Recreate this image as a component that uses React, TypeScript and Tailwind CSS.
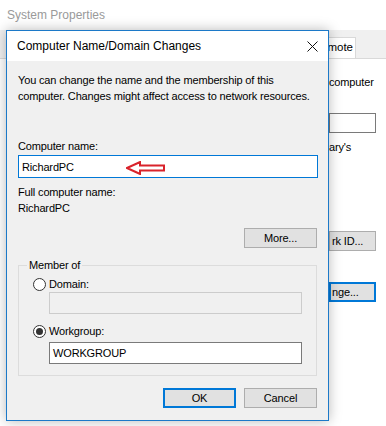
import React from 'react';

function Radio({ checked }: { checked?: boolean }) {
  return (
    <span className="w-[13px] h-[13px] rounded-full border border-[#333] bg-white flex items-center justify-center shrink-0">
      {checked && <span className="w-[7px] h-[7px] rounded-full bg-[#333]" />}
    </span>
  );
}

function RedArrow() {
  return (
    <svg width="40" height="14" viewBox="0 0 40 14" className="ml-[52px] mt-[3px]">
      <path
        d="M1 7 L14 1 L14 4.5 L38 4.5 L38 9.5 L14 9.5 L14 13 Z"
        fill="#fff"
        stroke="#d9232b"
        strokeWidth="2"
        strokeLinejoin="miter"
      />
    </svg>
  );
}

export default function App() {
  return (
    <div
      className="relative w-[386px] h-[426px] overflow-hidden bg-white text-black"
      style={{ fontFamily: '"Liberation Sans", Arial, sans-serif' }}
    >
      {/* background window */}
      <div className="h-[30px] pl-[7px] flex items-center text-[12px] text-[#9a9a9a]">System Properties</div>
      <div className="h-[28px] bg-[#f0f0f0] flex items-end pl-[300px]">
        <div className="h-[21px] w-[56px] border border-b-0 border-[#d9d9d9] bg-white text-[11.5px] flex items-center justify-end pr-[2px]">
          Remote
        </div>
      </div>
      <div className="flex flex-col pl-[329px] text-[11px] tracking-[-0.15px] border-t border-[#d9d9d9]">
        <div className="mt-[15px] h-[16px] flex items-center">computer</div>
        <div className="mt-[23px] w-[47px] h-[20px] border border-[#7a7a7a] bg-white" />
        <div className="mt-[6px] h-[16px] flex items-center">ary's</div>
        <div className="mt-[76px] w-[47px] h-[20px] border border-[#adadad] bg-[#e1e1e1] flex items-center pl-[2px]">rk ID...</div>
        <div className="mt-[31px] w-[47px] h-[20px] border-2 border-[#0078d7] bg-[#e1e1e1] flex items-center pl-[1px]">nge...</div>
      </div>

      {/* dialog */}
      <div className="absolute left-[6px] top-[30px] w-[323px] h-[391px] border border-[#1c79c8] bg-[#f0f0f0] flex flex-col shadow-[0_0_12px_rgba(0,0,0,0.28)]">
        <div className="h-[30px] bg-white flex items-center justify-between pl-[10px] pr-[10px] text-[12px]">
          <span>Computer Name/Domain Changes</span>
          <svg width="11" height="11" viewBox="0 0 11 11">
            <path d="M0.5 0.5 L10.5 10.5 M10.5 0.5 L0.5 10.5" stroke="#111" strokeWidth="1" />
          </svg>
        </div>
        <div className="flex flex-col pl-[11px] pr-[10px] pt-[11px] text-[11px] tracking-[-0.15px] leading-[16px]">
          <p>
            You can change the name and the membership of this
            <br />
            computer. Changes might affect access to network resources.
          </p>

          <div className="mt-[34px]">Computer name:</div>
          <div className="mt-[1px] h-[23px] border border-[#0078d7] bg-white flex items-center pl-[3px]">
            <span>RichardPC</span>
            <RedArrow />
          </div>

          <div className="mt-[6px]">Full computer name:</div>
          <div>RichardPC</div>

          <button className="mt-[12px] self-end mr-[1px] w-[73px] h-[20px] border border-[#adadad] bg-[#e1e1e1]">More...</button>

          <fieldset className="mt-[9px] mr-[1px] border border-[#dcdcdc] pl-[14px] pb-[11px]">
            <legend className="ml-[-6px] px-[2px] leading-[16px]">Member of</legend>
            <div className="mt-[3px] flex items-center gap-[3px] h-[16px]">
              <Radio />
              <span>Domain:</span>
            </div>
            <div className="ml-[16px] mr-[14px] h-[22px] border border-[#cccccc] bg-[#f0f0f0]" />
            <div className="mt-[9px] flex items-center gap-[3px] h-[16px]">
              <Radio checked />
              <span>Workgroup:</span>
            </div>
            <div className="mt-[3px] ml-[16px] mr-[14px] h-[22px] border border-[#7a7a7a] bg-white flex items-center pl-[3px]">
              WORKGROUP
            </div>
          </fieldset>

          <div className="mt-[12px] flex justify-end gap-[8px] mr-[1px]">
            <button className="w-[73px] h-[20px] border-2 border-[#0078d7] bg-[#e1e1e1]">OK</button>
            <button className="w-[73px] h-[20px] border border-[#adadad] bg-[#e1e1e1]">Cancel</button>
          </div>
        </div>
      </div>
    </div>
  );
}
